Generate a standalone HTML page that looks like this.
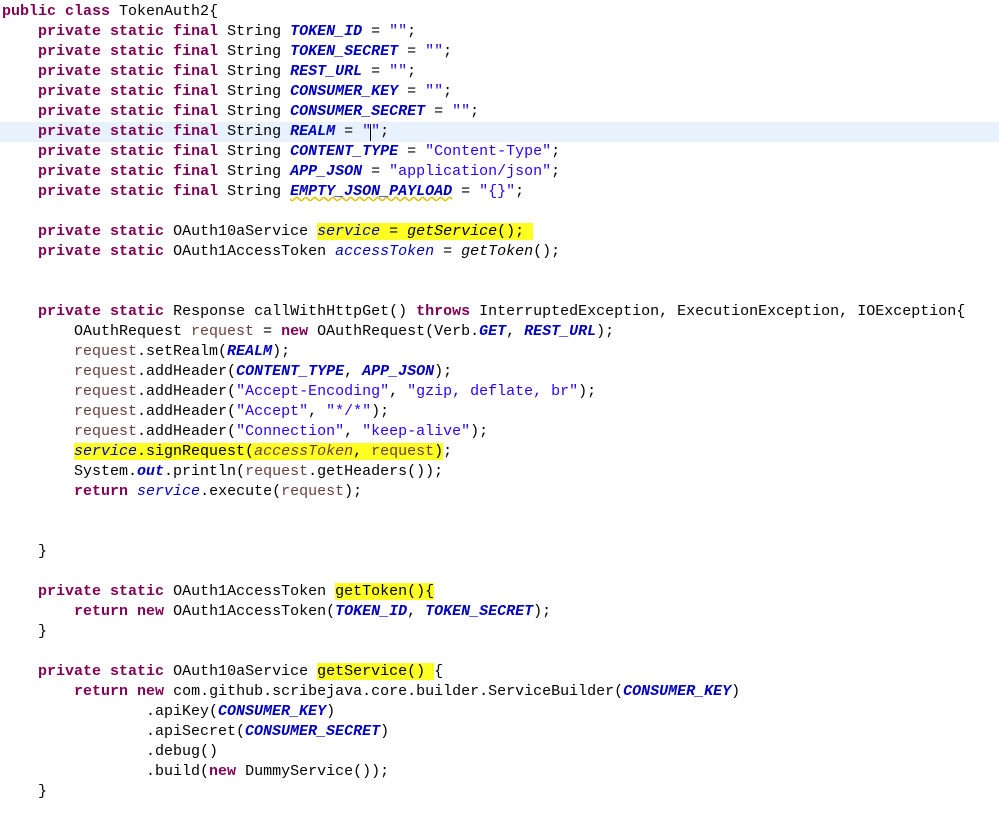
<!DOCTYPE html>
<html><head><meta charset="utf-8"><style>
html,body{margin:0;padding:0;background:#fff;width:999px;height:821px;overflow:hidden}
pre{margin:0;position:absolute;left:2px;top:2px;font-family:"Liberation Mono",monospace;font-size:15px;line-height:20px;color:#000}
.k{color:#7f0055;font-weight:bold}
.f{color:#0000c0;font-weight:bold;font-style:italic}
.s{color:#2a00ff}
.l{color:#6a3e3e}
.i{color:#0000c0;font-style:italic}
.h{background:#ffff22}
.cur{position:absolute;left:0;top:122px;width:999px;height:20px;background:#e8f2fe}
.caret{position:absolute;left:370px;top:124px;width:1px;height:17px;background:#000}
.sq{text-decoration:underline wavy #e0c000}
</style></head><body>
<div class="cur"></div>
<pre><span class="k">public</span> <span class="k">class</span> TokenAuth2{
    <span class="k">private</span> <span class="k">static</span> <span class="k">final</span> String <span class="f">TOKEN_ID</span> = <span class="s">""</span>;
    <span class="k">private</span> <span class="k">static</span> <span class="k">final</span> String <span class="f">TOKEN_SECRET</span> = <span class="s">""</span>;
    <span class="k">private</span> <span class="k">static</span> <span class="k">final</span> String <span class="f">REST_URL</span> = <span class="s">""</span>;
    <span class="k">private</span> <span class="k">static</span> <span class="k">final</span> String <span class="f">CONSUMER_KEY</span> = <span class="s">""</span>;
    <span class="k">private</span> <span class="k">static</span> <span class="k">final</span> String <span class="f">CONSUMER_SECRET</span> = <span class="s">""</span>;
    <span class="k">private</span> <span class="k">static</span> <span class="k">final</span> String <span class="f">REALM</span> = <span class="s">""</span>;
    <span class="k">private</span> <span class="k">static</span> <span class="k">final</span> String <span class="f">CONTENT_TYPE</span> = <span class="s">"Content-Type"</span>;
    <span class="k">private</span> <span class="k">static</span> <span class="k">final</span> String <span class="f">APP_JSON</span> = <span class="s">"application/json"</span>;
    <span class="k">private</span> <span class="k">static</span> <span class="k">final</span> String <span class="f sq">EMPTY_JSON_PAYLOAD</span> = <span class="s">"{}"</span>;

    <span class="k">private</span> <span class="k">static</span> OAuth10aService <span class="h"><span class="i">service</span> = <span style="font-style:italic">getService</span>(); </span>
    <span class="k">private</span> <span class="k">static</span> OAuth1AccessToken <span class="i">accessToken</span> = <span style="font-style:italic">getToken</span>();


    <span class="k">private</span> <span class="k">static</span> Response callWithHttpGet() <span class="k">throws</span> InterruptedException, ExecutionException, IOException{
        OAuthRequest <span class="l">request</span> = <span class="k">new</span> OAuthRequest(Verb.<span class="f">GET</span>, <span class="f">REST_URL</span>);
        <span class="l">request</span>.setRealm(<span class="f">REALM</span>);
        <span class="l">request</span>.addHeader(<span class="f">CONTENT_TYPE</span>, <span class="f">APP_JSON</span>);
        <span class="l">request</span>.addHeader(<span class="s">"Accept-Encoding"</span>, <span class="s">"gzip, deflate, br"</span>);
        <span class="l">request</span>.addHeader(<span class="s">"Accept"</span>, <span class="s">"*/*"</span>);
        <span class="l">request</span>.addHeader(<span class="s">"Connection"</span>, <span class="s">"keep-alive"</span>);
        <span class="h"><span class="i">service</span>.signRequest(<span class="l" style="font-style:italic">accessToken</span>, <span class="l">request</span>)</span>;
        System.<span class="f">out</span>.println(<span class="l">request</span>.getHeaders());
        <span class="k">return</span> <span class="i">service</span>.execute(<span class="l">request</span>);


    }

    <span class="k">private</span> <span class="k">static</span> OAuth1AccessToken <span class="h">getToken(){</span>
        <span class="k">return</span> <span class="k">new</span> OAuth1AccessToken(<span class="f">TOKEN_ID</span>, <span class="f">TOKEN_SECRET</span>);
    }

    <span class="k">private</span> <span class="k">static</span> OAuth10aService <span class="h">getService() </span>{
        <span class="k">return</span> <span class="k">new</span> com.github.scribejava.core.builder.ServiceBuilder(<span class="f">CONSUMER_KEY</span>)
                .apiKey(<span class="f">CONSUMER_KEY</span>)
                .apiSecret(<span class="f">CONSUMER_SECRET</span>)
                .debug()
                .build(<span class="k">new</span> DummyService());
    }
</pre>
<div class="caret"></div>
</body></html>
